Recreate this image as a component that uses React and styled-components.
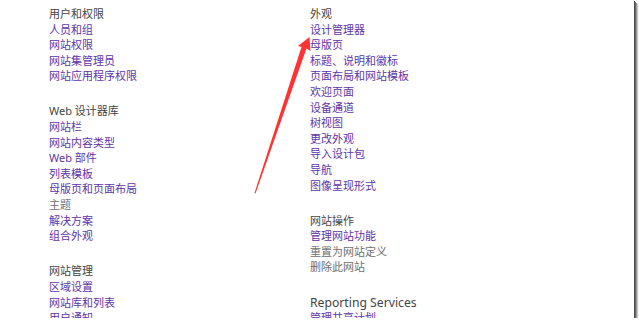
import React from "react";
import styled, { createGlobalStyle } from "styled-components";

const Global = createGlobalStyle`
  html, body { margin: 0; padding: 0; background: #ffffff; }
  body { font-family: "Noto Sans", "Noto Sans CJK SC", sans-serif; }
`;

const Frame = styled.div`
  position: relative;
  width: 634px;
  height: 318px;
  background: #ffffff;
  overflow: hidden;
  box-shadow: 1px 1px 0 #4a4a4a, 2px 2px 0 #6a6a6a, 3px 3px 0 #9a9a9a, 4px 4px 1px #c8c8c8;
`;

const Columns = styled.div`
  display: grid;
  grid-template-columns: 261px 1fr;
  padding: 6px 0 0 49px;
`;

const Column = styled.div`
  display: flex;
  flex-direction: column;
  gap: 19.5px;
`;

const Group = styled.div`
  display: flex;
  flex-direction: column;
`;

const Heading = styled.div`
  font-size: ${(p) => (p.$latin ? "12.2px" : "11px")};
  line-height: 15.6px;
  color: #444444;
  white-space: nowrap;
`;

const Item = styled.div`
  font-size: 11px;
  line-height: 15.6px;
  color: ${(p) => (p.$muted ? "#6f6f6f" : "#5e34a8")};
  white-space: nowrap;
`;

const Arrow = styled.svg`
  position: absolute;
  left: 0;
  top: 0;
  pointer-events: none;
`;

const left = [
  { title: "用户和权限", items: ["人员和组", "网站权限", "网站集管理员", "网站应用程序权限"] },
  {
    title: "Web 设计器库",
    items: ["网站栏", "网站内容类型", "Web 部件", "列表模板", "母版页和页面布局", { t: "主题", muted: true }, "解决方案", "组合外观"],
  },
  { title: "网站管理", items: ["区域设置", "网站库和列表", "用户通知"] },
];

const right = [
  {
    title: "外观",
    items: ["设计管理器", "母版页", "标题、说明和徽标", "页面布局和网站模板", "欢迎页面", "设备通道", "树视图", "更改外观", "导入设计包", "导航", "图像呈现形式"],
  },
  { title: "网站操作", items: ["管理网站功能", { t: "重置为网站定义", muted: true }, { t: "删除此网站", muted: true }] },
  { title: "Reporting Services", latin: true, items: ["管理共享计划"] },
];

function Groups({ data }) {
  return (
    <Column>
      {data.map((g) => (
        <Group key={g.title}>
          <Heading $latin={g.latin}>{g.title}</Heading>
          {g.items.map((it) => {
            const t = typeof it === "string" ? it : it.t;
            const muted = typeof it === "string" ? false : it.muted;
            return (
              <Item key={t} $muted={muted}>
                {t}
              </Item>
            );
          })}
        </Group>
      ))}
    </Column>
  );
}

export default function App() {
  return (
    <>
      <Global />
      <Frame>
        <Columns>
          <Groups data={left} />
          <Groups data={right} />
        </Columns>
        <Arrow width="634" height="318" viewBox="0 0 634 318">
          <polygon points="254.5,193 301.5,47 298,46 309.5,37 310.5,51 306.5,48.5 255.5,193.5" fill="#ff3333" />
        </Arrow>
      </Frame>
    </>
  );
}
